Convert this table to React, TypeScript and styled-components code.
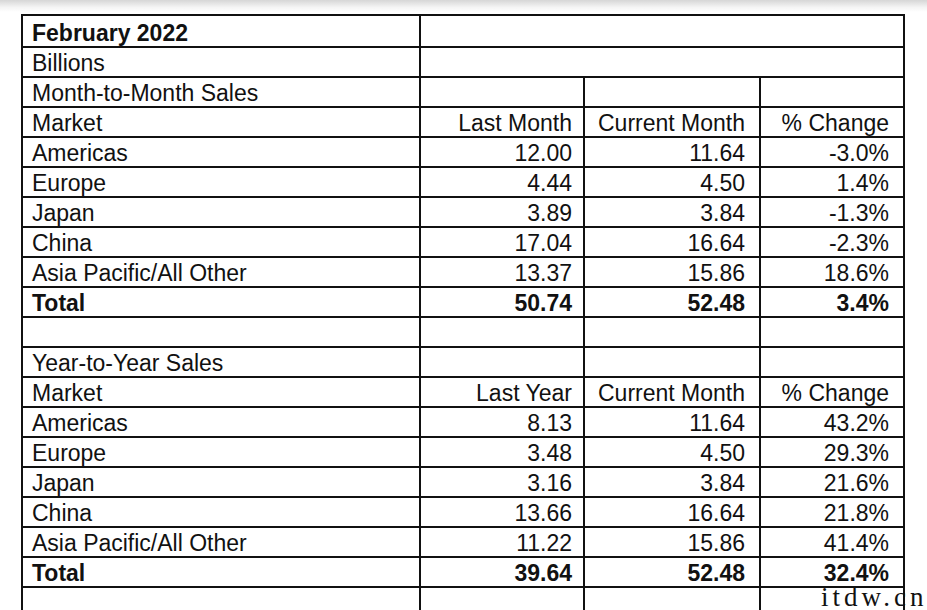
import styled, { createGlobalStyle } from 'styled-components';

const GlobalStyle = createGlobalStyle`
  html, body {
    margin: 0;
    padding: 0;
    background: #ffffff;
    overflow: hidden;
  }
  body {
    width: 927px;
    height: 610px;
    font-family: "Liberation Sans", Arial, sans-serif;
    color: #111;
  }
`;

const Page = styled.div`
  position: relative;
  width: 927px;
  height: 610px;
  overflow: hidden;
  display: flex;
  flex-flow: column nowrap;
`;

const Shade = styled.div`
  height: 12px;
  flex-shrink: 0;
  background: linear-gradient(#d6d6d6, #f4f4f4 60%, #ffffff);
`;

const Sheet = styled.table`
  margin: 2px 0 0 21px;
  width: 882px;
  border-collapse: collapse;
  table-layout: fixed;
  font-size: 23px;
  color: #111;
`;

const Row = styled.tr<{ $tall?: boolean }>`
  height: ${({ $tall }) => ($tall ? '32px' : '30px')};
`;

const Cell = styled.td<{ $bold?: boolean; $right?: boolean }>`
  border: 2px solid #111;
  padding: 0 14px 0 9px;
  vertical-align: bottom;
  white-space: nowrap;
  font-weight: ${({ $bold }) => ($bold ? 700 : 400)};
  text-align: ${({ $right }) => ($right ? 'right' : 'left')};
  line-height: 26px;

  &:nth-child(2) {
    padding-right: 11px;
  }
`;

const Watermark = styled.div`
  position: absolute;
  left: 821px;
  top: 584px;
  font-family: "Liberation Serif", "Noto Sans CJK SC", serif;
  font-size: 27px;
  line-height: 1;
  letter-spacing: 4px;
  color: #111;
  white-space: nowrap;
`;

type Line = [string, string, string, string];

const monthRows: Line[] = [
  ['Americas', '12.00', '11.64', '-3.0%'],
  ['Europe', '4.44', '4.50', '1.4%'],
  ['Japan', '3.89', '3.84', '-1.3%'],
  ['China', '17.04', '16.64', '-2.3%'],
  ['Asia Pacific/All Other', '13.37', '15.86', '18.6%']
];

const yearRows: Line[] = [
  ['Americas', '8.13', '11.64', '43.2%'],
  ['Europe', '3.48', '4.50', '29.3%'],
  ['Japan', '3.16', '3.84', '21.6%'],
  ['China', '13.66', '16.64', '21.8%'],
  ['Asia Pacific/All Other', '11.22', '15.86', '41.4%']
];

function DataRow({ line, bold }: { line: Line; bold?: boolean }) {
  return (
    <Row>
      <Cell $bold={bold}>{line[0]}</Cell>
      <Cell $bold={bold} $right>
        {line[1]}
      </Cell>
      <Cell $bold={bold} $right>
        {line[2]}
      </Cell>
      <Cell $bold={bold} $right>
        {line[3]}
      </Cell>
    </Row>
  );
}

function Section({
  title,
  lastLabel,
  rows,
  total
}: {
  title: string;
  lastLabel: string;
  rows: Line[];
  total: Line;
}) {
  return (
    <>
      <DataRow line={[title, '', '', '']} />
      <Row>
        <Cell>Market</Cell>
        <Cell $right>{lastLabel}</Cell>
        <Cell $right>Current Month</Cell>
        <Cell $right>% Change</Cell>
      </Row>
      {rows.map((line) => (
        <DataRow key={line[0]} line={line} />
      ))}
      <DataRow line={total} bold />
    </>
  );
}

export default function App() {
  return (
    <Page>
      <GlobalStyle />
      <Shade />
      <Sheet>
        <colgroup>
          <col style={{ width: 398 }} />
          <col style={{ width: 164 }} />
          <col style={{ width: 176 }} />
          <col style={{ width: 144 }} />
        </colgroup>
        <tbody>
          <Row $tall>
            <Cell $bold>February 2022</Cell>
            <Cell colSpan={3} />
          </Row>
          <Row>
            <Cell>Billions</Cell>
            <Cell colSpan={3} />
          </Row>
          <Section
            title="Month-to-Month Sales"
            lastLabel="Last Month"
            rows={monthRows}
            total={['Total', '50.74', '52.48', '3.4%']}
          />
          <DataRow line={['', '', '', '']} />
          <Section
            title="Year-to-Year Sales"
            lastLabel="Last Year"
            rows={yearRows}
            total={['Total', '39.64', '52.48', '32.4%']}
          />
          <DataRow line={['', '', '', '']} />
        </tbody>
      </Sheet>
      <Watermark>itdw.cn</Watermark>
    </Page>
  );
}
